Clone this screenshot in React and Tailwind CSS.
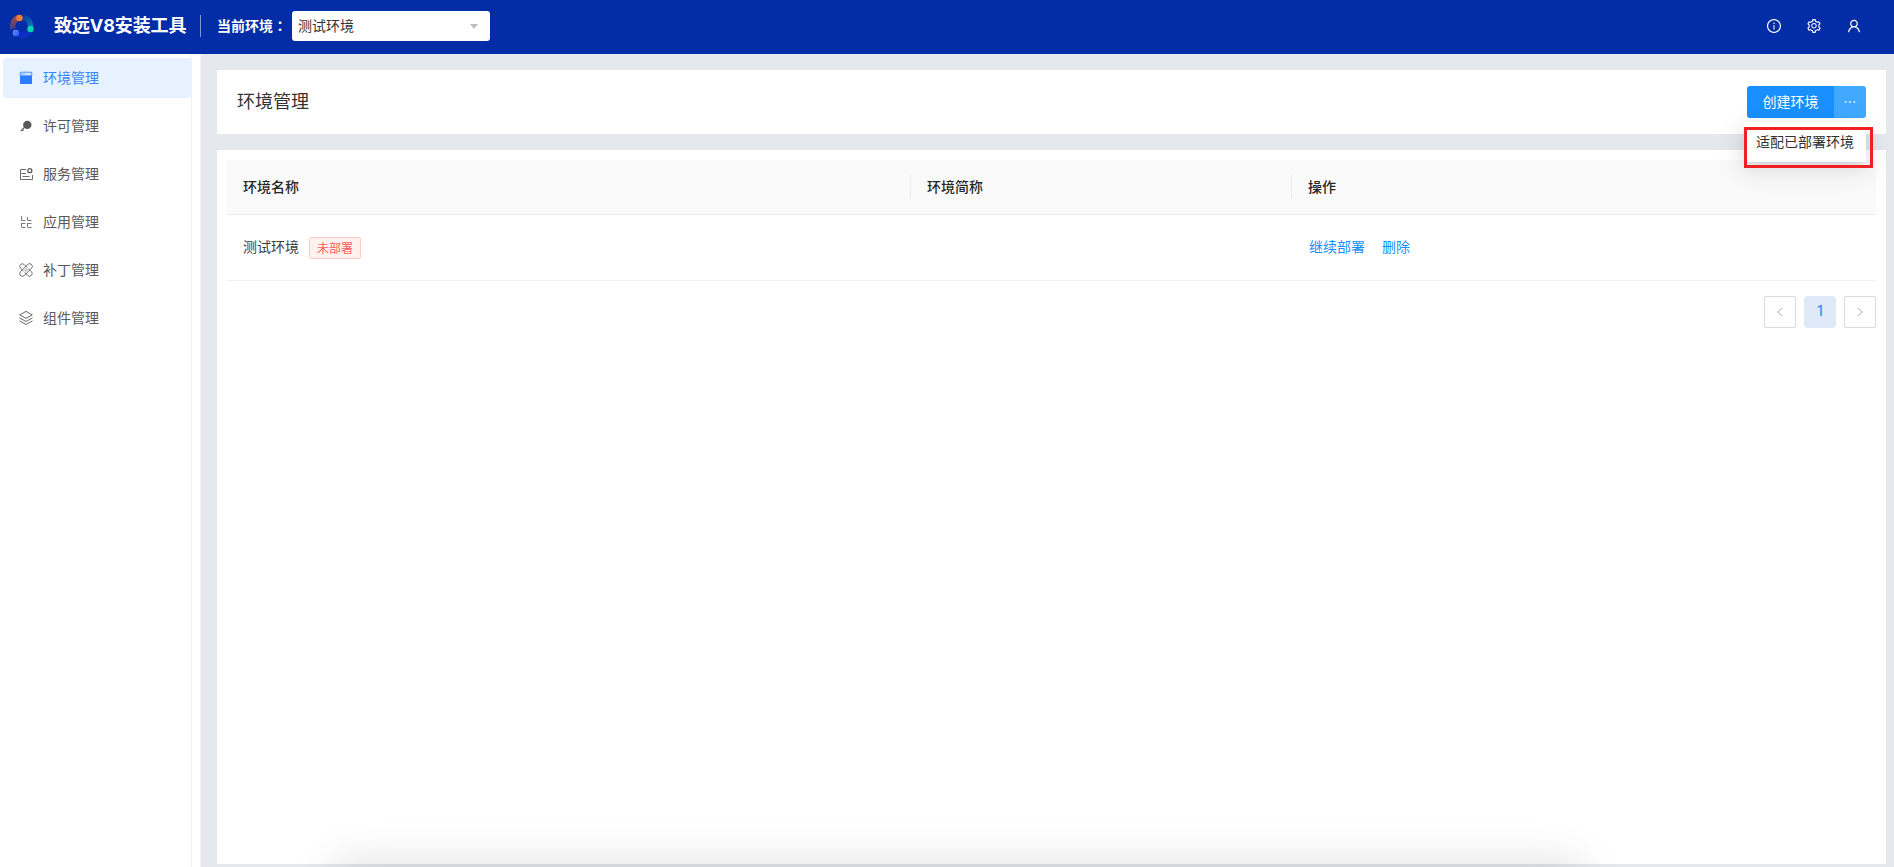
import React from 'react';
import clsx from 'clsx';
import {
  AiOutlineEllipsis,
  AiOutlineInfoCircle,
  AiOutlineLeft,
  AiOutlineRight,
  AiOutlineSetting,
  AiOutlineUser,
} from 'react-icons/ai';

function Logo() {
  return (
    <svg viewBox="0 0 26 26" className="w-[26px] h-[26px] shrink-0 -mt-[3px]" fill="none">
      <defs>
        <linearGradient id="arcWarm" x1="10" y1="3" x2="4" y2="18" gradientUnits="userSpaceOnUse">
          <stop stopColor="#b0522f" />
          <stop offset="1" stopColor="#353a98" />
        </linearGradient>
        <linearGradient id="arcTeal" x1="14" y1="3" x2="23" y2="14" gradientUnits="userSpaceOnUse">
          <stop stopColor="#0a3aa6" />
          <stop offset="1" stopColor="#077fae" />
        </linearGradient>
        <linearGradient id="dotBlue" x1="4" y1="16" x2="10" y2="22" gradientUnits="userSpaceOnUse">
          <stop stopColor="#6a8cff" />
          <stop offset="1" stopColor="#2a62ff" />
        </linearGradient>
      </defs>
      <path d="M10.5 4.500A9 9 0 0 0 4 16" stroke="url(#arcWarm)" strokeWidth="5.500" />
      <path d="M14 4.300A9 9 0 0 1 21.500 14" stroke="url(#arcTeal)" strokeWidth="5.500" />
      <path d="M8 20.500A9 9 0 0 0 21 17.500" stroke="#0c30c4" strokeWidth="5.500" />
      <circle cx="10.500" cy="5" r="3.200" fill="#ee7a40" />
      <circle cx="21.500" cy="16" r="3.200" fill="#04d3ae" />
      <circle cx="6.900" cy="20" r="3.200" fill="url(#dotBlue)" />
    </svg>
  );
}

function EnvIcon() {
  return (
    <svg viewBox="0 0 14 14" className="w-3.5 h-3.5">
      <rect x="1.200" y="1.200" width="11.600" height="4" rx=".8" fill="#cfe4ff" stroke="#2b7cff" strokeWidth=".8" />
      <path d="M1 4.500h12v7.500c0 .6-.4 1-1 1H2c-.6 0-1-.4-1-1z" fill="#2b7cff" />
      <path d="M2.500 2.800h1M4.500 2.800h1" stroke="#2b7cff" strokeWidth=".8" />
    </svg>
  );
}

function LicenseIcon() {
  return (
    <svg viewBox="0 0 14 14" className="w-3.5 h-3.5" fill="none">
      <circle cx="8.300" cy="5.900" r="4.200" fill="#595959" />
      <path d="M5.600 8.200L1.800 12.200M3.300 10.500l1.300 1.100" stroke="#595959" strokeWidth="1.200" />
    </svg>
  );
}

function ServiceIcon() {
  return (
    <svg viewBox="0 0 14 14" className="w-3.5 h-3.5" fill="none" stroke="#6b6b6b">
      <path d="M7 2.500H1.500v10h12V8M2.500 6.500H7M3.500 9.500h7" />
      <circle cx="10.800" cy="3.700" r="2" stroke="#595959" strokeWidth="1.300" />
    </svg>
  );
}

function AppIcon() {
  return (
    <svg viewBox="0 0 14 14" className="w-3.5 h-3.5" fill="none" stroke="#7a7a7a">
      <path d="M2.500 1v4.500h4M8.500 2v3.500h4M2.500 12V8M2 8.500h4.500M2.500 12.500h4M8.500 12V8M8 8.500h4.500M8.500 12.500h4" />
    </svg>
  );
}

function PatchIcon() {
  return (
    <svg viewBox="0 0 14 14" className="w-3.5 h-3.5" fill="none" stroke="#595959" strokeWidth=".85">
      <rect x="-.8" y="4.300" width="15.600" height="5.400" rx="2.700" transform="rotate(-45 7 7)" />
      <path d="M4.600 8.300L1.600 5.300a2.600 2.600 0 0 1 3.700-3.700l3 3M9.400 5.700l3 3a2.600 2.600 0 0 1-3.700 3.700l-3-3" />
      <path d="M7 5.500v.9M7 7.600v.9M5.500 7h.9M7.600 7h.9" />
    </svg>
  );
}

function ComponentIcon() {
  return (
    <svg viewBox="0 0 14 14" className="w-3.5 h-3.5" fill="none" stroke="#595959" strokeWidth=".9">
      <path d="M7 .4l6.300 3.500L7 7.400.7 3.900z" />
      <path d="M.5 6.900L7 10.500l6.500-3.600M.5 9.900L7 13.500l6.500-3.600" />
    </svg>
  );
}

const MENU = [
  { label: '环境管理', icon: EnvIcon, active: true },
  { label: '许可管理', icon: LicenseIcon },
  { label: '服务管理', icon: ServiceIcon },
  { label: '应用管理', icon: AppIcon },
  { label: '补丁管理', icon: PatchIcon },
  { label: '组件管理', icon: ComponentIcon },
];

function Header() {
  return (
    <header className="flex items-center h-[54px] shrink-0 bg-[#022da6] text-white pl-[9px] pr-8">
      <Logo />
      <h1 className="ml-[19px] w-[146px] text-lg leading-none font-bold tracking-[-0.1px] whitespace-nowrap -mt-0.5">致远V8安装工具</h1>
      <div className="w-px h-[22px] -mt-0.5 bg-white/50" />
      <span className="ml-4 w-[75px] h-4 text-sm leading-4 font-bold whitespace-nowrap -mt-1">
        当前环境<span className="font-['Noto_Sans_CJK_TC',sans-serif]">：</span>
      </span>
      <button
        type="button"
        className="flex items-center justify-between w-[198px] h-[30px] -mt-0.5 rounded-[3px] bg-white pl-1.5 pr-3 text-sm text-[#333]"
      >
        测试环境
        <svg viewBox="0 0 8 5" className="w-2 h-[5px]" fill="#bfbfbf">
          <path d="M0 0h8L4 5z" />
        </svg>
      </button>
      <div className="ml-auto flex items-center gap-6 text-base -mt-0.5">
        <AiOutlineInfoCircle />
        <AiOutlineSetting />
        <AiOutlineUser />
      </div>
    </header>
  );
}

function Sidebar() {
  return (
    <aside className="w-[201px] shrink-0 bg-white border-r border-[#f0f0f0]">
      <nav className="flex flex-col gap-2 w-48 h-full pt-1 pl-[3px] border-r border-[#f0f0f0]">
        {MENU.map(({ label, icon: Icon, active }) => (
          <a
            key={label}
            className={clsx(
              'flex items-center gap-2.5 h-10 pl-4 text-sm',
              active ? '-mr-px rounded bg-[#e6f2ff] text-[#3a86ff]' : 'text-[#595959]'
            )}
          >
            <Icon />
            <span>{label}</span>
          </a>
        ))}
      </nav>
    </aside>
  );
}

function CreateActions() {
  return (
    <div className="relative flex h-8 text-sm text-white">
      <button type="button" className="w-[87px] rounded-l-[3px] bg-[#1890ff]">创建环境</button>
      <button type="button" className="flex items-center justify-center w-8 rounded-r-[3px] bg-[#40a9ff] text-base">
        <AiOutlineEllipsis />
      </button>
      <div className="absolute right-0 top-9 z-10 w-[122px] h-10 pl-3 pt-[9px] rounded-xs bg-white leading-[22px] text-[#333] whitespace-nowrap shadow-[0_3px_6px_-4px_rgba(0,0,0,0.12),0_6px_16px_0_rgba(0,0,0,0.08),0_9px_28px_8px_rgba(0,0,0,0.05)]">
        适配已部署环境
      </div>
      <div className="absolute -right-[7px] top-[41px] z-20 w-[129px] h-[41px] border-3 border-[#f02023]" />
    </div>
  );
}

function EnvTable() {
  return (
    <table className="w-full table-fixed text-left text-sm">
      <colgroup>
        <col className="w-[684px]" />
        <col className="w-[381px]" />
        <col />
      </colgroup>
      <thead>
        <tr className="h-[54px] bg-[#fafafa] border-b border-[#ebebeb] text-[#262626]">
          <th className="p-0 font-medium">
            <div className="flex items-center h-6 pl-4 border-r border-[#ececec]">环境名称</div>
          </th>
          <th className="p-0 font-medium">
            <div className="flex items-center h-6 pl-4 border-r border-[#ececec]">环境简称</div>
          </th>
          <th className="p-0 pl-4 font-medium">操作</th>
        </tr>
      </thead>
      <tbody>
        <tr className="h-[66px] border-b border-[#f0f0f0] text-[#404040]">
          <td className="p-0 pl-4">
            <div className="flex items-center">
              <span className="-mt-px">测试环境</span>
              <span className="ml-2.5 mt-px h-[22px] px-[7px] rounded-xs border border-[#ffccc7] bg-[#fff1f0] text-xs leading-[21px] text-[#ff5c5f]">
                未部署
              </span>
            </div>
          </td>
          <td />
          <td className="p-0 pl-[17px]">
            <div className="flex gap-[17px] text-[#1890ff]">
              <a>继续部署</a>
              <a>删除</a>
            </div>
          </td>
        </tr>
      </tbody>
    </table>
  );
}

function Pagination() {
  return (
    <div className="flex justify-end gap-2 mt-[15px] text-xs">
      <button type="button" className="flex items-center justify-center w-8 h-8 rounded-xs border border-[#d9d9d9] text-[#bfbfbf]">
        <AiOutlineLeft />
      </button>
      <button type="button" className="w-8 h-8 pb-0.5 rounded bg-[#dfe9f8] text-sm font-medium text-[#3296fa]">1</button>
      <button type="button" className="flex items-center justify-center w-8 h-8 rounded-xs border border-[#d9d9d9] text-[#bfbfbf]">
        <AiOutlineRight />
      </button>
    </div>
  );
}

export default function App() {
  return (
    <div className="relative flex flex-col h-screen overflow-hidden bg-[#e5e9ee] font-[Inter,'Noto_Sans_CJK_SC',sans-serif]">
      <Header />
      <div className="flex flex-1 min-h-0">
        <Sidebar />
        <main className="flex flex-col flex-1 gap-4 pt-4 pl-4 pr-2 pb-[3px]">
          <section className="flex items-center justify-between h-16 shrink-0 pl-5 pr-5 bg-white">
            <h2 className="text-lg leading-none text-[#333]">环境管理</h2>
            <CreateActions />
          </section>
          <section className="flex-1 p-2.5 bg-white">
            <EnvTable />
            <Pagination />
          </section>
        </main>
      </div>
      {/* soft shadow rising from below the viewport */}
      <div className="absolute left-[336px] right-[314px] top-full h-20 pointer-events-none shadow-[0_0_48px_0_rgba(0,0,0,0.15)]" />
    </div>
  );
}
